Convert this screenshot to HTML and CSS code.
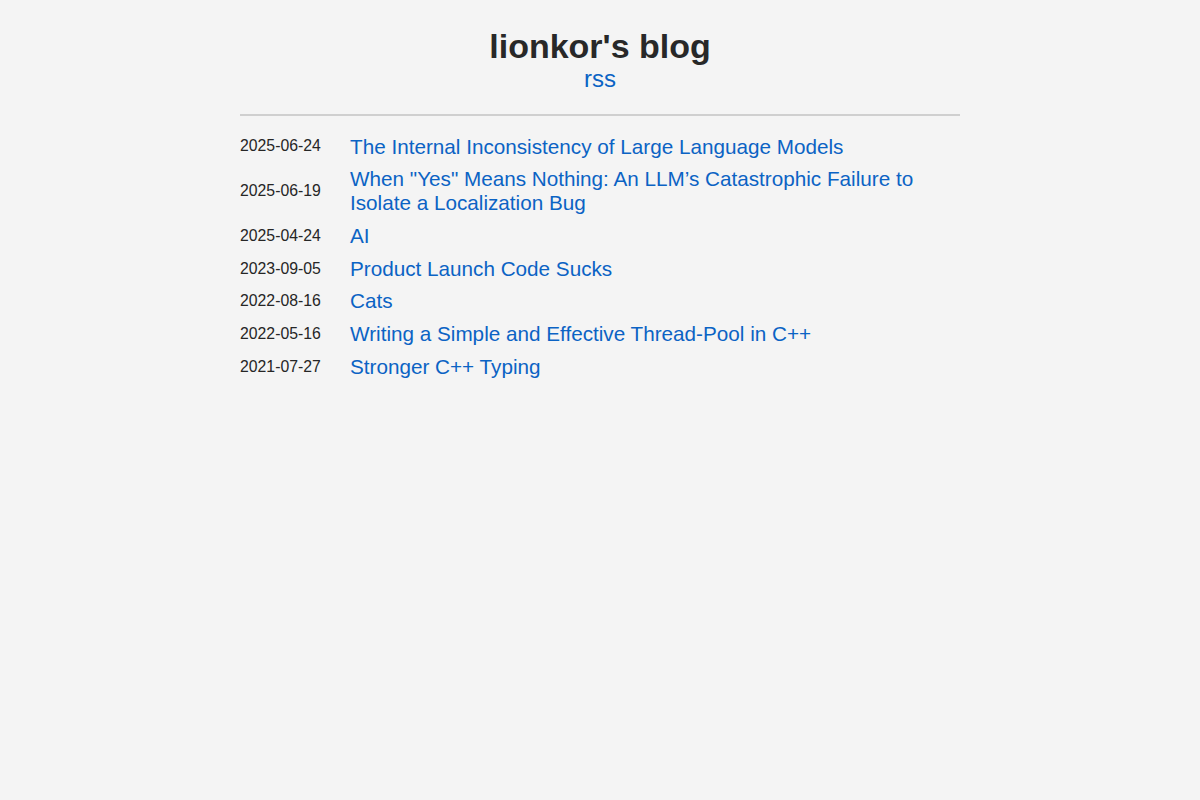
FILE: index.html
```html
<!DOCTYPE html>
<html>
<head>
<meta charset="utf-8">
<title>lionkor's blog</title>
<link rel="stylesheet" href="styles.css">
</head>
<body>
<div class="page">
  <header class="header">
    <h1 class="title">lionkor's blog</h1>
    <a class="rss" href="#">rss</a>
  </header>
  <hr class="divider">
  <ul class="posts">
    <li class="post"><span class="date">2025-06-24</span><a class="link" href="#">The Internal Inconsistency of Large Language Models</a></li>
    <li class="post"><span class="date">2025-06-19</span><a class="link" href="#">When "Yes" Means Nothing: An LLM’s Catastrophic Failure to Isolate a Localization Bug</a></li>
    <li class="post"><span class="date">2025-04-24</span><a class="link" href="#">AI</a></li>
    <li class="post"><span class="date">2023-09-05</span><a class="link" href="#">Product Launch Code Sucks</a></li>
    <li class="post"><span class="date">2022-08-16</span><a class="link" href="#">Cats</a></li>
    <li class="post"><span class="date">2022-05-16</span><a class="link" href="#">Writing a Simple and Effective Thread-Pool in C++</a></li>
    <li class="post"><span class="date">2021-07-27</span><a class="link" href="#">Stronger C++ Typing</a></li>
  </ul>
</div>
</body>
</html>
```

FILE: styles.css
```css
html, body {
  margin: 0;
  padding: 0;
  background: #f4f4f4;
  color: #222222;
  font-family: "Liberation Sans", Arial, sans-serif;
}

.page {
  width: 720px;
  margin: 0 auto;
  padding-top: 28px;
}

.header {
  display: flex;
  flex-direction: column;
  align-items: center;
}

.title {
  margin: 0;
  font-size: 34px;
  line-height: 37px;
  font-weight: bold;
  color: #282828;
}

.rss {
  font-size: 24px;
  line-height: 28px;
  color: #0b63c4;
  text-decoration: none;
}

.divider {
  margin: 21px 0 14px 0;
  border: none;
  border-top: 2px solid #cfcfcf;
  height: 0;
}

.posts {
  list-style: none;
  margin: 0;
  padding: 0;
}

.post {
  display: grid;
  grid-template-columns: 110px 1fr;
  align-items: center;
  padding: 4.5px 0;
}

.date {
  font-size: 15.8px;
  line-height: 18px;
  color: #262626;
}

.link {
  font-size: 20.7px;
  line-height: 23.8px;
  color: #0b63c4;
  text-decoration: none;
}
```
